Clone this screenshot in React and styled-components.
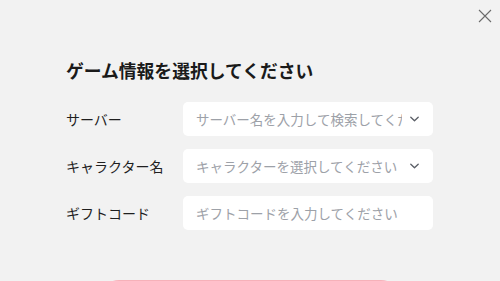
import React from 'react';
import styled, { createGlobalStyle } from 'styled-components';

const GlobalStyle = createGlobalStyle`
  html, body {
    margin: 0;
    padding: 0;
    background: #f2f2f2;
  }
  body {
    font-family: "Noto Sans CJK JP", "Noto Sans", sans-serif;
  }
`;

const Modal = styled.div`
  position: relative;
  width: 500px;
  height: 281px;
  overflow: hidden;
  background: #f2f2f2;
  box-sizing: border-box;
  padding: 55px 0 0 66px;
`;

const CloseButton = styled.button`
  position: absolute;
  top: 8px;
  right: 8px;
  width: 15px;
  height: 15px;
  padding: 0;
  border: none;
  background: none;
  display: flex;
  align-items: center;
  justify-content: center;
  cursor: pointer;
`;

const Title = styled.h2`
  margin: 0;
  font-size: 17.8px;
  line-height: 30px;
  font-weight: 700;
  color: #1a1a1a;
`;

const Form = styled.div`
  width: 367px;
  margin-top: 17px;
  display: grid;
  grid-template-columns: 117px 250px;
  row-gap: 13px;
  align-items: center;
`;

const Label = styled.label`
  font-size: 14px;
  color: #1f1f1f;
  white-space: nowrap;
`;

const Field = styled.div`
  height: 34px;
  box-sizing: border-box;
  background: #ffffff;
  border-radius: 5px;
  display: flex;
  align-items: center;
  padding: 0 14px 0 13px;
  gap: 8px;
`;

const Placeholder = styled.span`
  flex: 1;
  min-width: 0;
  overflow: hidden;
  white-space: nowrap;
  font-size: 13.5px;
  color: #9da1a8;
`;

const SubmitButton = styled.button`
  display: block;
  width: 302px;
  height: 40px;
  margin: 49.5px 0 0 33px;
  border: none;
  border-radius: 20px;
  background: #f6b1b9;
`;

const Chevron = () => (
  <svg width="9" height="6" viewBox="0 0 9 6" fill="none">
    <path d="M0.8 1.2l3.7 3.6 3.7-3.6" stroke="#5a5e66" strokeWidth="1.3" strokeLinecap="round" strokeLinejoin="round" />
  </svg>
);

const fields = [
  { label: 'サーバー', placeholder: 'サーバー名を入力して検索してください', select: true },
  { label: 'キャラクター名', placeholder: 'キャラクターを選択してください', select: true },
  { label: 'ギフトコード', placeholder: 'ギフトコードを入力してください', select: false },
];

export default function App() {
  return (
    <>
      <GlobalStyle />
      <Modal>
        <CloseButton aria-label="close">
          <svg width="14" height="14" viewBox="0 0 14 14">
            <path d="M1 1l12 12M13 1L1 13" stroke="#6b6b6b" strokeWidth="1.1" />
          </svg>
        </CloseButton>
        <Title>ゲーム情報を選択してください</Title>
        <Form>
          {fields.map(f => (
            <React.Fragment key={f.label}>
              <Label>{f.label}</Label>
              <Field>
                <Placeholder>{f.placeholder}</Placeholder>
                {f.select && <Chevron />}
              </Field>
            </React.Fragment>
          ))}
        </Form>
        <SubmitButton />
      </Modal>
    </>
  );
}
